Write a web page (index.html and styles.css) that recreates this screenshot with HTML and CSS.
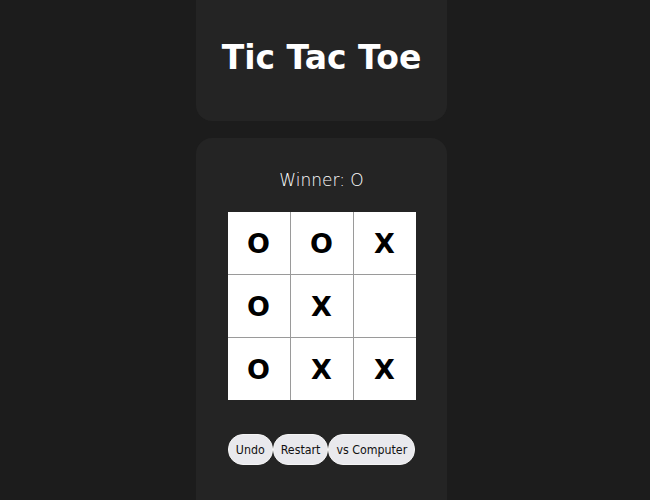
FILE: index.html
```html
<!DOCTYPE html>
<html>
<head>
<meta charset="utf-8">
<link rel="stylesheet" href="styles.css">
</head>
<body>
<div class="app">
  <header class="card header">
    <h1 class="title">Tic Tac Toe</h1>
  </header>
  <main class="card game">
    <div class="status">Winner: O</div>
    <div class="board">
      <div class="cell">O</div>
      <div class="cell">O</div>
      <div class="cell">X</div>
      <div class="cell">O</div>
      <div class="cell">X</div>
      <div class="cell"></div>
      <div class="cell">O</div>
      <div class="cell">X</div>
      <div class="cell">X</div>
    </div>
    <div class="controls">
      <button class="btn">Undo</button>
      <button class="btn">Restart</button>
      <button class="btn">vs Computer</button>
    </div>
  </main>
</div>
</body>
</html>
```
FILE: styles.css
```css
html, body {
  margin: 0;
  padding: 0;
  background: #1c1c1c;
  height: 100%;
  overflow: hidden;
}
body {
  font-family: "DejaVu Sans", sans-serif;
  color: #fff;
}
.app {
  width: 251px;
  margin-left: 196px;
  margin-top: -20px;
  display: flex;
  flex-direction: column;
  gap: 17px;
}
.card {
  background: #242424;
  border-radius: 16px;
}
.header {
  height: 141px;
  display: flex;
  align-items: center;
  justify-content: center;
  padding-top: 14px;
  box-sizing: border-box;
}
.title {
  margin: 0;
  font-family: "DejaVu Sans", sans-serif;
  font-weight: bold;
  font-size: 33px;
  color: #fff;
}
.game {
  height: 400px;
  display: flex;
  flex-direction: column;
  align-items: center;
  padding-top: 30px;
  box-sizing: border-box;
}
.status {
  font-family: "DejaVu Sans", sans-serif;
  font-weight: 200;
  font-size: 17px;
  color: #ffffff;
  height: 24px;
  line-height: 24px;
}
.board {
  margin-top: 20px;
  display: grid;
  grid-template-columns: repeat(3, 62px);
  grid-template-rows: repeat(3, 62px);
  gap: 1px;
  background: #9a9a9a;
  border: 0;
}
.cell {
  background: #fff;
  color: #000;
  display: flex;
  align-items: center;
  justify-content: center;
  font-family: "DejaVu Sans", sans-serif;
  font-weight: bold;
  font-size: 27px;
}
.controls {
  margin-top: 34px;
  display: flex;
}
.btn {
  font-family: "DejaVu Sans Condensed", "DejaVu Sans", sans-serif;
  font-stretch: condensed;
  font-size: 12.3px;
  color: #111;
  background: #e9e9ed;
  border: 1px solid #f4f4f4;
  border-radius: 15px;
  height: 31px;
  padding: 0 7px;
  margin: 0;
}
```
